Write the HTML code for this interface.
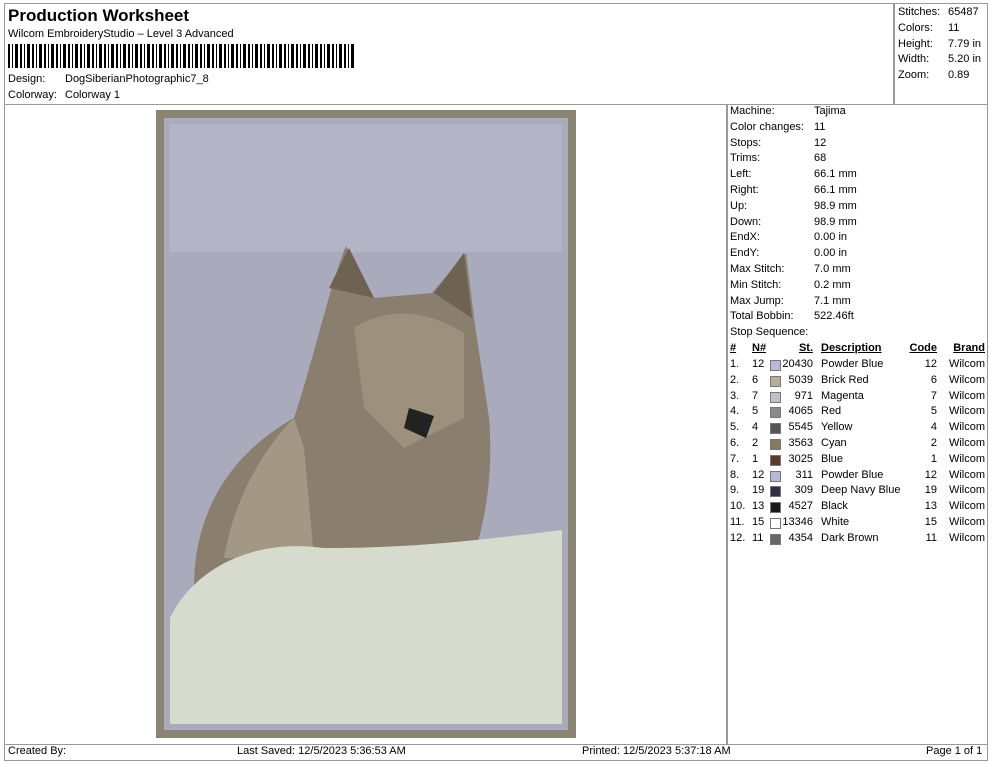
<html><head><style>
body{margin:0;width:990px;height:762px;background:#fff;font-family:"Liberation Sans",sans-serif;font-size:11px;color:#000;position:relative;overflow:hidden}
.a{position:absolute;white-space:nowrap}
.b{position:absolute;border:1px solid #999}
.u{text-decoration:underline;font-weight:bold}
.sw{display:inline-block;width:9px;height:9px;border:1px solid #777;vertical-align:-1px}
</style></head><body>
<div class="b" style="left:4px;top:3px;width:889px;height:100px"></div>
<div class="b" style="left:893px;top:3px;width:93px;height:100px"></div>
<div class="b" style="left:4px;top:104px;width:722px;height:639px"></div>
<div class="b" style="left:726px;top:104px;width:260px;height:639px"></div>
<div class="b" style="left:4px;top:744px;width:982px;height:15px"></div>
<div class="a" style="left:8px;top:6px;font-size:17px;font-weight:bold">Production Worksheet</div>
<div class="a" style="left:8px;top:28px">Wilcom EmbroideryStudio – Level 3 Advanced</div>
<div class="a" style="left:8px;top:44px;width:348px;height:24px;background:repeating-linear-gradient(90deg,#000 0 2px,#fff 2px 4px,#000 4px 5px,#fff 5px 7px,#000 7px 10px,#fff 10px 12px)"></div>
<div class="a" style="left:8px;top:73px">Design:</div><div class="a" style="left:65px;top:73px">DogSiberianPhotographic7_8</div>
<div class="a" style="left:8px;top:89px">Colorway:</div><div class="a" style="left:65px;top:89px">Colorway 1</div>
<div class="a" style="left:898px;top:5px;line-height:15.8px">Stitches:<br>Colors:<br>Height:<br>Width:<br>Zoom:</div>
<div class="a" style="left:948px;top:5px;line-height:15.8px">65487<br>11<br>7.79 in<br>5.20 in<br>0.89</div>
<div class="a" style="left:730px;top:104px;line-height:15.8px">Machine:<br>Color changes:<br>Stops:<br>Trims:<br>Left:<br>Right:<br>Up:<br>Down:<br>EndX:<br>EndY:<br>Max Stitch:<br>Min Stitch:<br>Max Jump:<br>Total Bobbin:<br>Stop Sequence:</div>
<div class="a" style="left:814px;top:104px;line-height:15.8px">Tajima<br>11<br>12<br>68<br>66.1 mm<br>66.1 mm<br>98.9 mm<br>98.9 mm<br>0.00 in<br>0.00 in<br>7.0 mm<br>0.2 mm<br>7.1 mm<br>522.46ft</div>
<div class="a" style="left:729px;top:341px;line-height:15.8px;width:256px">
<div style="position:relative;height:15.8px"><span class="a u" style="left:1px">#</span><span class="a u" style="left:23px">N#</span><span class="a u" style="right:172px">St.</span><span class="a u" style="left:92px">Description</span><span class="a u" style="right:48px">Code</span><span class="a u" style="right:0">Brand</span></div>
</div>
<div id="t" class="a" style="left:729px;top:357px;width:256px;line-height:15.8px"></div>
<script>
var d=[["12","#b8b8d8","20430","Powder Blue"],["6","#b8ab98","5039","Brick Red"],["7","#c0c0c0","971","Magenta"],["5","#8a8a8a","4065","Red"],["4","#5a5550","5545","Yellow"],["2","#857a62","3563","Cyan"],["1","#5a3a28","3025","Blue"],["12","#b8b8d8","311","Powder Blue"],["19","#303040","309","Deep Navy Blue"],["13","#181818","4527","Black"],["15","#ffffff","13346","White"],["11","#6a6560","4354","Dark Brown"]];
var h="";d.forEach(function(r,i){h+='<div style="position:relative;height:15.8px"><span class="a" style="left:1px">'+(i+1)+'.</span><span class="a" style="left:23px">'+r[0]+'</span><span class="a" style="left:41px;top:3px"><span class="sw" style="background:'+r[1]+'"></span></span><span class="a" style="right:172px">'+r[2]+'</span><span class="a" style="left:92px">'+r[3]+'</span><span class="a" style="right:48px">'+r[0]+'</span><span class="a" style="right:0">Wilcom</span></div>'});document.getElementById("t").innerHTML=h;
</script>
<div class="a" style="left:156px;top:110px;width:420px;height:628px;background:#8a8474"></div>
<div class="a" style="left:164px;top:118px;width:404px;height:612px;background:#a9abbd"></div>
<div class="a" style="left:170px;top:124px;width:392px;height:128px;background:#b3b5c6"></div>
<svg class="a" style="left:164px;top:118px" width="404" height="612">
<path d="M30 470 C30 400 60 340 130 300 C150 240 165 170 182 128 L210 180 L268 175 L302 135 L310 200 L325 300 C330 360 320 420 300 460 L260 470 Z" fill="#8a7e6e"/>
<path d="M165 170 l20 -40 l25 50 Z M270 175 l30 -40 l8 65 Z" fill="#6e6252"/>
<path d="M130 300 C100 330 70 380 60 440 L150 440 L140 330 Z" fill="#a39886"/>
<path d="M190 210 C220 190 260 190 300 215 L300 300 L240 330 L200 290 Z" fill="#9d907c"/>
<path d="M245 290 l25 8 l-8 22 l-22 -10 Z" fill="#222"/>
<path d="M6 500 C30 450 90 420 160 430 C260 430 330 420 398 412 L398 606 L6 606 Z" fill="#d7dbcd"/>
</svg>
<div class="a" style="left:8px;top:745px">Created By:</div>
<div class="a" style="left:237px;top:745px">Last Saved: 12/5/2023 5:36:53 AM</div>
<div class="a" style="left:582px;top:745px">Printed: 12/5/2023 5:37:18 AM</div>
<div class="a" style="left:926px;top:745px">Page 1 of 1</div>
</body></html>
